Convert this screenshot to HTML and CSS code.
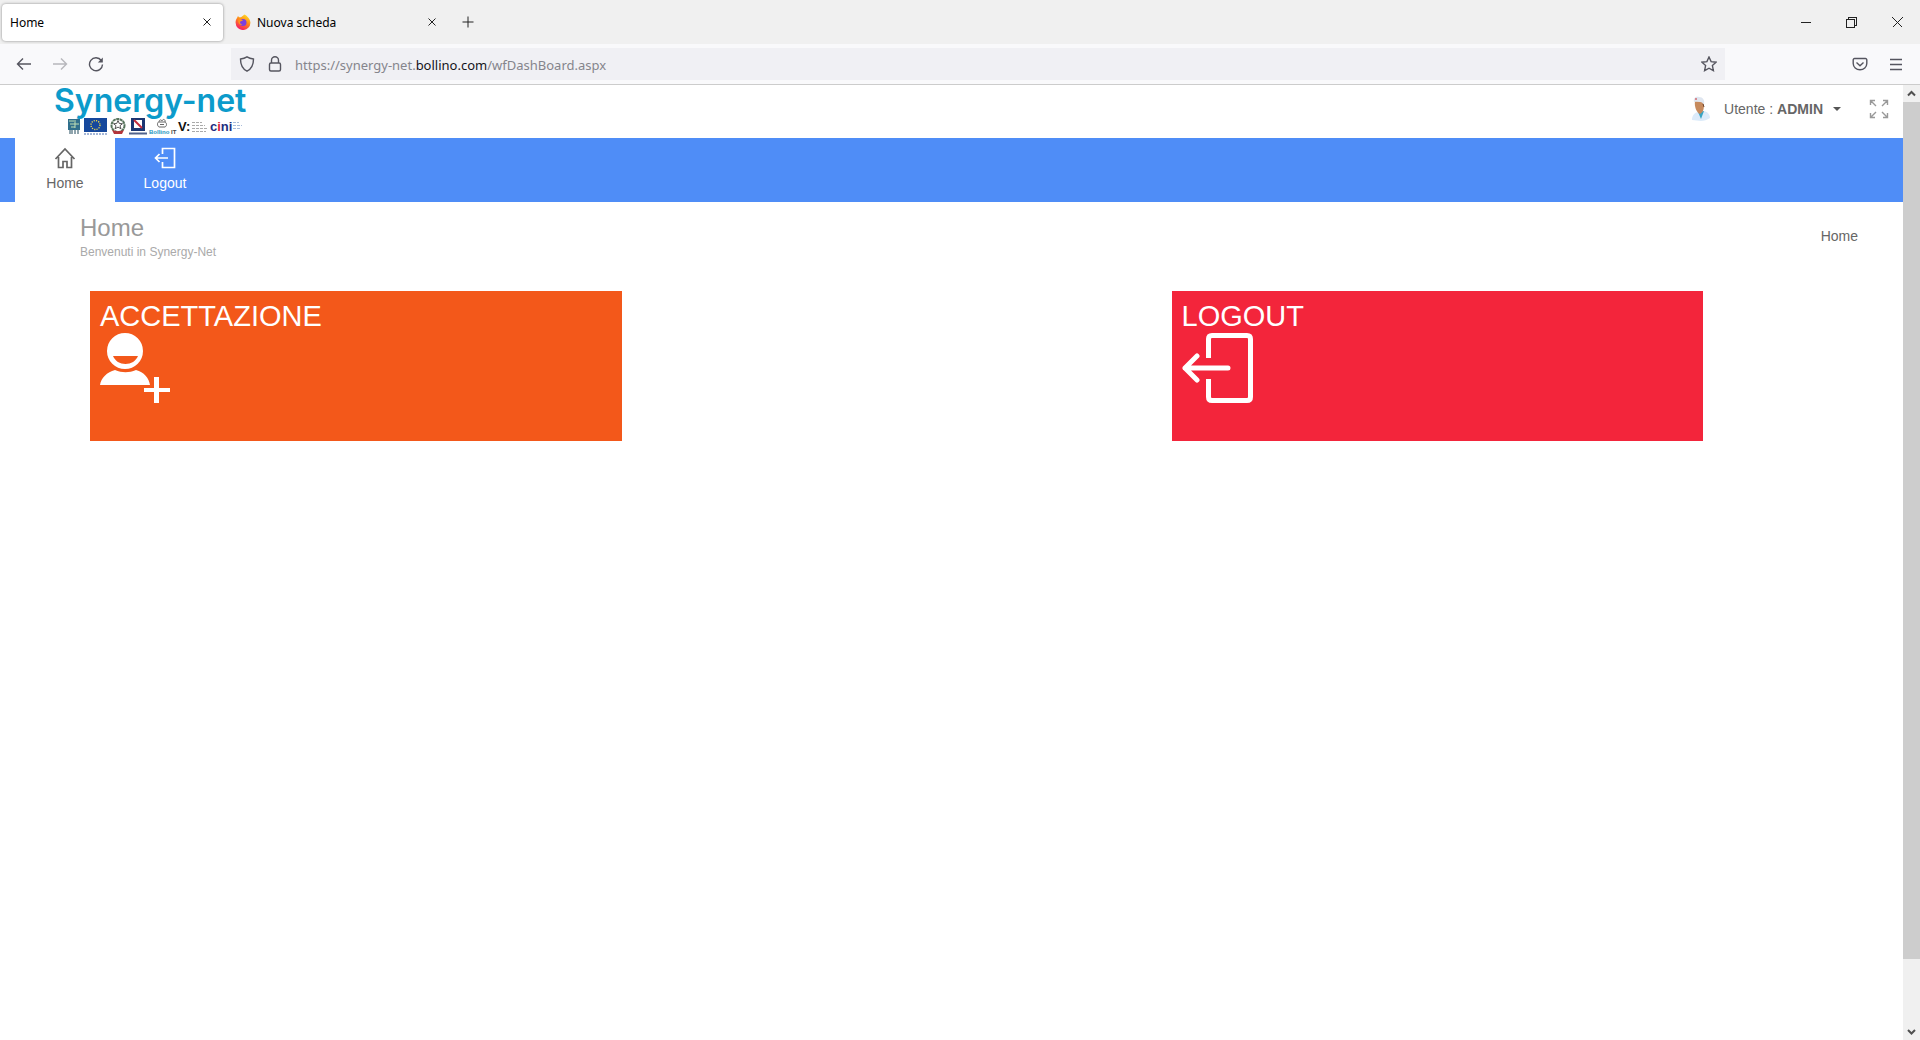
FILE: index.html
```html
<!DOCTYPE html>
<html lang="it">
<head>
  <meta charset="utf-8">
  <title>Home</title>
  <link rel="stylesheet" href="styles.css">
</head>
<body>
  <div class="browser">
    <!-- Tabs -->
    <div class="tab-bar">
      <div class="tab active">
        <span class="tab-title">Home</span>
        <button class="tab-close" aria-label="Chiudi scheda"><svg width="8" height="8" viewBox="0 0 8 8"><path d="M0.5 0.5l7 7M7.5 0.5l-7 7"/></svg></button>
      </div>
      <div class="tab">
        <svg class="favicon" width="16" height="16" viewBox="0 0 16 16">
          <defs>
            <linearGradient id="fox" x1="0.8" y1="0" x2="0.3" y2="1">
              <stop offset="0" stop-color="#ffe226"/>
              <stop offset="0.45" stop-color="#ff8a16"/>
              <stop offset="1" stop-color="#f5156c"/>
            </linearGradient>
          </defs>
          <path fill="url(#fox)" d="M2 4l1-2 1 1.300h2L9.500.5c2 1 5.700 4 5.900 8a7.400 7.400 0 0 1-14.800.3C.5 7 1 5.500 2 4z"/>
          <circle cx="8" cy="8.500" r="3.500" fill="#7a3fe0"/>
          <path fill="#ff9420" d="M3.500 5.500c2-.8 3.500 0 4.500 1-1 .2-2 1-3 1.200-.2 1.500 1 3 2.500 3-2.500 1-5-1.500-4-5.200z"/>
        </svg>
        <span class="tab-title">Nuova scheda</span>
        <button class="tab-close" aria-label="Chiudi scheda"><svg width="8" height="8" viewBox="0 0 8 8"><path d="M0.5 0.5l7 7M7.5 0.5l-7 7"/></svg></button>
      </div>
      <button class="new-tab" aria-label="Nuova scheda"><svg width="12" height="12" viewBox="0 0 12 12"><path d="M6 0.500v11M0.500 6h11"/></svg></button>
      <div class="window-btns">
        <button aria-label="Riduci"><svg width="11" height="11" viewBox="0 0 11 11"><path d="M0.500 5.500h10"/></svg></button>
        <button aria-label="Ripristina"><svg width="11" height="11" viewBox="0 0 11 11"><path d="M0.500 2.500h8v8h-8zM2.500 2.500v-2h8v8h-2"/></svg></button>
        <button aria-label="Chiudi"><svg width="11" height="11" viewBox="0 0 11 11"><path d="M0.500 0.500l10 10M10.500 0.500l-10 10"/></svg></button>
      </div>
    </div>

    <!-- Toolbar -->
    <div class="toolbar">
      <div class="nav-btns">
        <button aria-label="Indietro"><svg width="16" height="16" viewBox="0 0 16 16"><path d="M15 8H1.500M7 2.500L1.500 8l5.500 5.500"/></svg></button>
        <button class="disabled" aria-label="Avanti" disabled><svg width="16" height="16" viewBox="0 0 16 16"><path d="M1 8h13.500M9 2.500l5.500 5.500L9 13.500"/></svg></button>
        <button aria-label="Ricarica"><svg width="16" height="16" viewBox="0 0 16 16"><path d="M13.300 4.500A6.500 6.500 0 1 0 14.500 8.500"/><path class="solid" d="M14.800 1.500v5h-5z"/></svg></button>
      </div>
      <div class="url-bar">
        <svg width="16" height="16" viewBox="0 0 16 16"><path d="M8 .8c2 1.300 4 1.900 6.500 2.200 0 5.500-1.500 9.700-6.500 12.200C3 12.700 1.500 8.500 1.500 3 4 2.700 6 2.100 8 .8z"/></svg>
        <svg width="16" height="16" viewBox="0 0 16 16"><rect x="2.500" y="7" width="11" height="8" rx="1.500"/><path d="M4.500 7V4.300a3.500 3.500 0 0 1 7 0V7"/></svg>
        <a class="url" href="#">https://synergy-net.<b>bollino.com</b>/wfDashBoard.aspx</a>
        <button aria-label="Segnalibro"><svg width="16" height="16" viewBox="0 0 16 16"><path d="M8 1l2.100 4.600 5 .6-3.700 3.400 1 5L8 12.200l-4.400 2.400 1-5L.9 6.200l5-.6z"/></svg></button>
      </div>
      <div class="tool-btns">
        <button aria-label="Pocket"><svg width="16" height="16" viewBox="0 0 16 16"><path d="M2.500 2.500h11a1.300 1.300 0 0 1 1.300 1.300v3.700a6.800 6.300 0 0 1-13.600 0V3.800a1.300 1.300 0 0 1 1.300-1.300zM4.500 6.500L8 9.700l3.500-3.200"/></svg></button>
        <button aria-label="Menu"><svg width="16" height="16" viewBox="0 0 16 16"><path d="M2 3.500h12M2 8.500h12M2 13.500h12"/></svg></button>
      </div>
    </div>

    <div class="viewport">
      <div class="page">
        <header class="header">
          <a class="brand" href="#">
            <span class="brand-name">Synergy-net</span>
            <svg class="partners" width="176" height="19" viewBox="0 0 176 19">
              <rect x="1" y="2" width="12" height="11" fill="#2f6f8c"/>
              <path d="M2 4h5M8 3v8M3 7h9M4 10h4" stroke="#bfe0b4" fill="none"/>
              <path d="M3 13v4M5 13v4M8 13v4M11 13v4" stroke="#214b5c" fill="none"/>
              <rect x="17" y="1" width="23" height="14" fill="#16489c"/>
              <circle cx="28.500" cy="8" r="4.500" fill="none" stroke="#f2dc4c" stroke-width="1.300" stroke-dasharray="1.200 1.150"/>
              <path d="M17 17h23" stroke="#4b6fb0" stroke-dasharray="2 1"/>
              <circle cx="51" cy="8.500" r="6.500" fill="#fff" stroke="#56735b" stroke-width="2" stroke-dasharray="3 .5"/>
              <path d="M51 3.500l1.300 3 3.200.2-2.500 2 1 3.100-3-1.700-3 1.700 1-3.100-2.500-2 3.200-.2z" fill="#fff" stroke="#555"/>
              <path d="M45 13c3 1.500 9 1.500 12 0l-2 4h-8z" fill="#b4353c"/>
              <rect x="64" y="1" width="14" height="13" fill="#1b3672"/>
              <rect x="67" y="3" width="8" height="8" fill="#fff"/>
              <path d="M67 3l8 8" stroke="#c22a3c" stroke-width="2"/>
              <path d="M62 16.500h18" stroke="#50628c" stroke-width="2"/>
              <path d="M92 5c-2 0-2 4 0 5h6c2-1 2-4 0-5zM92 5c0-2 2-3 3-1 1-3 4-1 3 1M93 7.500h4" fill="none" stroke="#666"/>
              <text x="82" y="17" class="p-bollino">Bollino <tspan fill="#444">IT</tspan></text>
              <text x="111" y="14" class="p-v">V:</text>
              <path d="M125 5.500h10M125 8.500h13M125 11.500h15M125 14.500h14" stroke="#aaa" stroke-dasharray="3 1"/>
              <text x="143" y="14" class="p-cini">c<tspan fill="#d9213b">i</tspan>ni</text>
              <path d="M166 5.500h6M166 8.500h9M166 11.500h7" stroke="#a9bddb" stroke-dasharray="3 1"/>
            </svg>
          </a>
          <div class="user-area">
            <svg class="avatar" width="22" height="26" viewBox="0 0 22 26">
              <path d="M2 24c0-5 3-8 7-8l5-1c4 1 6 4 6 7-3 2-6 3-9 3z" fill="#dcebfa"/>
              <path d="M8 16l3 7 3-8z" fill="#39a5c4"/>
              <path d="M5 5c-1 6 2 12 5 13 4-2 4-7 4-12z" fill="#c68a5d"/>
              <path d="M4 6c-1-4 2-6 5-5 4 0 6 3 5 8-1-3-4-4-10-3z" fill="#dfe6f0"/>
              <path d="M13 8l1 3" stroke="#70452c"/>
              <circle cx="6" cy="3" r="1" fill="#d26a70"/>
            </svg>
            <button class="user-menu">Utente : <strong>ADMIN</strong><span class="caret"></span></button>
            <button class="fullscreen" aria-label="Schermo intero"><svg width="20" height="20" viewBox="0 0 20 20"><path d="M7 7L2 2M13 7l5-5M7 13l-5 5M13 13l5 5M1.500 6V1.500H6M14 1.500h4.500V6M1.500 14v4.500H6M14 18.500h4.500V14"/></svg></button>
          </div>
        </header>

        <nav class="main-nav">
          <a class="nav-item current" href="#">
            <svg width="22" height="22" viewBox="0 0 22 22"><path d="M1.500 12L11 2l9.500 10M4.500 10v10.500h4.500v-6h4v6h4.500V10"/></svg>
            Home
          </a>
          <a class="nav-item" href="#">
            <svg width="22" height="22" viewBox="0 0 22 22"><path d="M8.500 7V1.500h12v19h-12V15M14 11H1.500M5.500 7l-4 4 4 4"/></svg>
            Logout
          </a>
        </nav>

        <main class="content">
          <div class="page-title">
            <div>
              <h1>Home</h1>
              <p>Benvenuti in Synergy-Net</p>
            </div>
            <a href="#">Home</a>
          </div>
          <div class="tiles">
            <a class="tile orange" href="#">
              <h2>ACCETTAZIONE</h2>
              <svg width="72" height="72" viewBox="0 0 72 72">
                <path fill-rule="evenodd" d="M25 1a18 18 0 1 1 0 36a18 18 0 0 1 0-36zM13 24c2 5 7 8 12.500 8S36 29 38 24z"/>
                <path d="M0 53c1-7 7-13 15-15 7 3 14 3 21 0 8 2 13 8 14 15z"/>
                <path d="M54 45h5v11h11v4H59v11h-5V60H44v-4h10z"/>
              </svg>
            </a>
            <a class="tile red" href="#">
              <h2>LOGOUT</h2>
              <svg class="line" width="72" height="72" viewBox="0 0 72 72"><path d="M26.500 26V7q0-3.500 3.500-3.500h35q3.500 0 3.500 3.500v58q0 3.500-3.500 3.500H30q-3.500 0-3.500-3.500V47"/><path stroke-linecap="round" stroke-linejoin="round" d="M46 36H3M15 24L3 36l12 12"/></svg>
            </a>
          </div>
        </main>
      </div>

      <div class="scrollbar">
        <svg width="17" height="17" viewBox="0 0 17 17"><path d="M5 10.500l3.500-3.500 3.500 3.500"/></svg>
        <div class="thumb"></div>
        <div class="track"></div>
        <svg width="17" height="17" viewBox="0 0 17 17"><path d="M5 7l3.500 3.500L12 7"/></svg>
      </div>
    </div>
  </div>
</body>
</html>
```
FILE: styles.css
```css
* {
  box-sizing: border-box;
}

body {
  margin: 0;
  font-family: "Liberation Sans", Arial, sans-serif;
  font-size: 14px;
  color: #666;
  background: #fff;
}

button {
  display: flex;
  align-items: center;
  justify-content: center;
  padding: 0;
  border: none;
  background: none;
  font: inherit;
  color: inherit;
  cursor: pointer;
}

a {
  color: inherit;
  text-decoration: none;
}

svg {
  display: block;
  flex: none;
}

.browser {
  display: flex;
  flex-direction: column;
  min-height: 100vh;
}

/* tab bar */
.tab-bar {
  display: flex;
  align-items: center;
  height: 44px;
  padding-left: 2px;
  background: #f0f0f0;
  font-family: "Noto Sans", sans-serif;
  font-size: 12px;
  color: #000;
}

.tab-bar svg path {
  stroke-width: 1;
}

.tab-bar button path,
.toolbar path,
.toolbar rect {
  fill: none;
  stroke: #222;
}

.tab {
  display: flex;
  align-items: center;
  gap: 6px;
  width: 221px;
  height: 37px;
  margin-right: 4px;
  padding: 0 8px;
}

.tab.active {
  background: #fff;
  border-radius: 4px;
  box-shadow: 0 0 3px #888;
}

.tab-title {
  flex: 1;
}

.tab-close {
  width: 16px;
  height: 24px;
}

.new-tab {
  width: 32px;
  height: 32px;
}

.window-btns {
  display: flex;
  margin-left: auto;
}

.window-btns button {
  width: 46px;
  height: 44px;
}

.window-btns path {
  shape-rendering: crispEdges;
}

/* toolbar */
.toolbar {
  display: flex;
  align-items: center;
  height: 41px;
  padding: 0 8px;
  background: #f9f9fb;
  border-bottom: 1px solid #ccc;
}

.toolbar path,
.toolbar rect {
  stroke: #55555f;
  stroke-width: 1.4;
}

.toolbar .solid {
  fill: #55555f;
  stroke: none;
}

.nav-btns {
  display: flex;
  gap: 4px;
  width: 223px;
}

.nav-btns button,
.tool-btns button {
  width: 32px;
  height: 32px;
}

.disabled {
  opacity: 0.4;
}

.url-bar {
  flex: 1;
  display: flex;
  align-items: center;
  gap: 12px;
  height: 32px;
  padding: 0 8px;
  background: #f0f0f4;
}

.url {
  flex: 1;
  padding-top: 2px;
  font-family: "Noto Sans", sans-serif;
  font-size: 13px;
  color: #85858c;
}

.url b {
  font-weight: normal;
  color: #15141a;
}

.tool-btns {
  display: flex;
  justify-content: flex-end;
  gap: 4px;
  width: 187px;
}

/* page */
.viewport {
  flex: 1;
  display: flex;
}

.page {
  flex: 1;
}

.header {
  display: flex;
  justify-content: space-between;
  height: 53px;
  padding: 0 14px 0 54px;
}

.brand {
  display: flex;
  flex-direction: column;
}

.brand-name {
  font-family: Inter, sans-serif;
  font-size: 32px;
  font-weight: 600;
  line-height: 32px;
  color: #0c9bcb;
}

.partners {
  margin-left: 13px;
}

.partners text {
  font-family: "Liberation Sans", Arial, sans-serif;
  font-weight: bold;
}

.p-bollino {
  font-size: 6px;
  fill: #2495c0;
}

.p-v {
  font-size: 13px;
  fill: #111;
}

.p-cini {
  font-size: 13px;
  fill: #1d2d80;
}

.user-area {
  display: flex;
  align-items: center;
  height: 48px;
}

.user-menu {
  margin: 0 28px 0 12px;
}

.user-menu strong {
  margin-left: 4px;
}

.caret {
  margin-left: 10px;
  border: 4px solid transparent;
  border-top-color: #555;
  border-bottom: none;
}

.fullscreen path {
  fill: none;
  stroke: #999;
  stroke-width: 1.4;
}

.main-nav {
  display: flex;
  height: 64px;
  padding-left: 15px;
  background: #4f8df7;
}

.nav-item {
  display: flex;
  flex-direction: column;
  align-items: center;
  gap: 5px;
  width: 100px;
  padding-top: 9px;
  line-height: 18px;
  color: #fff;
}

.nav-item.current {
  background: #fff;
  color: #666;
}

.nav-item path {
  fill: none;
  stroke: currentColor;
  stroke-width: 1.7;
}

.content {
  padding: 0 40px 0 80px;
}

.page-title {
  display: flex;
  justify-content: space-between;
  align-items: center;
  height: 68px;
  padding-right: 5px;
}

.page-title h1 {
  margin: 0;
  font-size: 24px;
  font-weight: normal;
  line-height: 32px;
  color: #999;
}

.page-title p {
  margin: 0;
  font-size: 12px;
  line-height: 16px;
  color: #aaa;
}

.tiles {
  display: grid;
  grid-template-columns: 30% 30%;
  column-gap: 31%;
  padding: 21px 0 0 10px;
}

.tile {
  height: 150px;
  padding: 10px;
  color: #fff;
}

.tile h2 {
  margin: 0;
  font-size: 29px;
  font-weight: normal;
  line-height: 31px;
}

.tile svg {
  fill: #fff;
}

.tile .line {
  fill: none;
  stroke: #fff;
  stroke-width: 5;
}

.orange {
  background: #f3581a;
}

.red {
  background: #f3253b;
}

/* scrollbar */
.scrollbar {
  display: flex;
  flex-direction: column;
  width: 17px;
  background: #f0f0f0;
}

.scrollbar path {
  fill: none;
  stroke: #505050;
  stroke-width: 2;
}

.thumb {
  flex: 93;
  background: #cdcdcd;
}

.track {
  flex: 7;
}
```
